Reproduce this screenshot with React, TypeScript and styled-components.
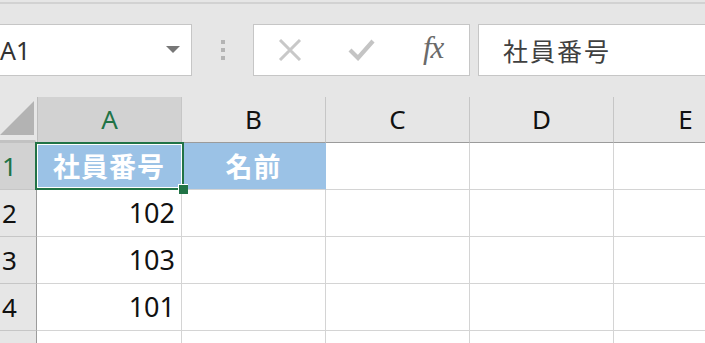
import React from 'react'
import styled, { createGlobalStyle, css } from 'styled-components'

const GlobalStyle = createGlobalStyle`
  html, body {
    margin: 0;
    padding: 0;
    background: #e6e6e6;
    overflow: hidden;
  }
  body {
    font-family: "Noto Sans CJK JP", "Noto Sans", sans-serif;
  }
`

const GREEN = '#217346'
const GRID = '#d4d4d4'
const FILL = '#9bc2e6'

const Wrapper = styled.div`
  width: 705px;
  height: 343px;
  overflow: hidden;
  background: #e6e6e6;
`

const TopRule = styled.div`
  height: 2px;
  margin-top: 2px;
  background: #d2d2d2;
`

const FormulaBar = styled.div`
  display: flex;
  align-items: stretch;
  height: 52px;
  margin-top: 20px;
  margin-bottom: 21px;
`

const NameBox = styled.div`
  box-sizing: border-box;
  width: 203px;
  margin-left: -11px;
  display: flex;
  align-items: center;
  justify-content: space-between;
  padding: 0 11px 0 10px;
  background: #fff;
  border: 1px solid #c6c6c6;
  font-family: "Noto Sans", sans-serif;
  font-size: 25px;
  color: #333;
`

const DropArrow = styled.span`
  width: 0;
  height: 0;
  border-left: 7px solid transparent;
  border-right: 7px solid transparent;
  border-top: 7px solid #777;
  margin-top: -2px;
`

const Grip = styled.div`
  width: 61px;
  display: flex;
  flex-direction: column;
  align-items: center;
  justify-content: center;
  gap: 4px;

  span {
    width: 4px;
    height: 4px;
    background: #b4b4b4;
  }
`

const FuncBox = styled.div`
  box-sizing: border-box;
  width: 217px;
  display: flex;
  background: #fff;
  border: 1px solid #c6c6c6;
`

const FuncSlot = styled.div`
  width: 72px;
  display: flex;
  align-items: center;
  justify-content: center;
`

const Fx = styled.span`
  font-family: "Liberation Serif", serif;
  font-style: italic;
  font-size: 31px;
  color: #6a6a6a;
  letter-spacing: -1px;
  margin-top: -4px;
`

const FormulaInput = styled.div`
  box-sizing: border-box;
  flex: 1;
  margin-left: 8px;
  margin-right: -10px;
  display: flex;
  align-items: center;
  padding-left: 24px;
  background: #fff;
  border: 1px solid #c6c6c6;
  font-size: 25px;
  color: #404040;
  letter-spacing: 2px;
`

const Sheet = styled.div`
  position: relative;
  display: grid;
  grid-template-columns: 37px 145px 144px 144px 144px 144px;
  grid-template-rows: 46px repeat(5, 47px);
  background: #fff;
`

const Corner = styled.div`
  position: relative;
  box-sizing: border-box;
  background: #e6e6e6;
  border-right: 2px solid #e6e6e6;
  border-bottom: 3px solid #c2c2c2;

  &::after {
    content: '';
    position: absolute;
    right: 1px;
    bottom: 5px;
    width: 0;
    height: 0;
    border-left: 34px solid transparent;
    border-bottom: 34px solid #b3b3b3;
  }
`

const ColHead = styled.div<{ $active?: boolean }>`
  box-sizing: border-box;
  display: flex;
  align-items: center;
  justify-content: center;
  padding-bottom: 2px;
  background: ${p => (p.$active ? '#d2d2d2' : '#e6e6e6')};
  border-right: 1px solid #c6c6c6;
  border-bottom: 1px solid #9b9b9b;
  font-family: "Noto Sans", sans-serif;
  font-size: 26px;
  color: ${p => (p.$active ? GREEN : '#111')};
  ${p => p.$active && css`border-left: 1px solid #bdbdbd;`}
`

const RowHead = styled.div<{ $active?: boolean }>`
  box-sizing: border-box;
  display: flex;
  align-items: center;
  padding-left: 2px;
  background: ${p => (p.$active ? '#d2d2d2' : '#e6e6e6')};
  border-right: 1px solid #9b9b9b;
  border-bottom: 1px solid #c6c6c6;
  font-family: "Noto Sans", sans-serif;
  font-size: 26px;
  color: ${p => (p.$active ? GREEN : '#111')};
`

const Cell = styled.div<{ $fill?: boolean; $num?: boolean }>`
  box-sizing: border-box;
  display: flex;
  align-items: center;
  justify-content: ${p => (p.$num ? 'flex-end' : 'center')};
  padding: 0 6px 2px 0;
  border-right: 1px solid ${p => (p.$fill ? FILL : GRID)};
  border-bottom: 1px solid ${GRID};
  background: ${p => (p.$fill ? FILL : '#fff')};
  font-size: 27px;
  color: #111;
  ${p =>
    p.$fill &&
    css`
      padding: 0 0 2px 0;
      color: #fff;
      font-weight: 700;
      letter-spacing: 1px;
    `}
  ${p =>
    p.$num &&
    css`
      font-family: "Noto Sans", sans-serif;
    `}
`

const Selection = styled.div`
  position: absolute;
  left: 35px;
  top: 45px;
  width: 149px;
  height: 48px;
  box-sizing: border-box;
  border: 2px solid ${GREEN};
  box-shadow: inset 0 0 0 1px #fff;
  pointer-events: none;
`

const FillHandle = styled.div`
  position: absolute;
  right: -6px;
  bottom: -6px;
  width: 9px;
  height: 9px;
  background: ${GREEN};
  border-top: 1px solid #fff;
  border-left: 1px solid #fff;
`

const cols = ['A', 'B', 'C', 'D', 'E']

// row 5 sits mostly below the fold, so its number is not visible
const rows: { n: number; label: string; cells: { text?: string; fill?: boolean; num?: boolean }[] }[] = [
  { n: 1, label: '1', cells: [{ text: '社員番号', fill: true }, { text: '名前', fill: true }, {}, {}, {}] },
  { n: 2, label: '2', cells: [{ text: '102', num: true }, {}, {}, {}, {}] },
  { n: 3, label: '3', cells: [{ text: '103', num: true }, {}, {}, {}, {}] },
  { n: 4, label: '4', cells: [{ text: '101', num: true }, {}, {}, {}, {}] },
  { n: 5, label: '', cells: [{}, {}, {}, {}, {}] },
]

function CancelIcon() {
  return (
    <svg width="26" height="22" viewBox="0 0 26 22">
      <path d="M3 1 L23 21 M23 1 L3 21" stroke="#c8c8c8" strokeWidth="3" fill="none" />
    </svg>
  )
}

function EnterIcon() {
  return (
    <svg width="27" height="22" viewBox="0 0 27 22">
      <path d="M2 11 L10 19 L25 2" stroke="#c4c4c4" strokeWidth="4.2" fill="none" strokeLinejoin="miter" />
    </svg>
  )
}

export default function App() {
  return (
    <Wrapper>
      <GlobalStyle />
      <TopRule />
      <FormulaBar>
        <NameBox>
          <span>A1</span>
          <DropArrow />
        </NameBox>
        <Grip>
          <span />
          <span />
          <span />
        </Grip>
        <FuncBox>
          <FuncSlot><CancelIcon /></FuncSlot>
          <FuncSlot><EnterIcon /></FuncSlot>
          <FuncSlot><Fx>fx</Fx></FuncSlot>
        </FuncBox>
        <FormulaInput>社員番号</FormulaInput>
      </FormulaBar>
      <Sheet>
        <Corner />
        {cols.map(c => (
          <ColHead key={c} $active={c === 'A'}>{c}</ColHead>
        ))}
        {rows.map(r => (
          <React.Fragment key={r.n}>
            <RowHead $active={r.n === 1}>{r.label}</RowHead>
            {r.cells.map((cell, i) => (
              <Cell key={i} $fill={cell.fill} $num={cell.num}>{cell.text}</Cell>
            ))}
          </React.Fragment>
        ))}
        <Selection>
          <FillHandle />
        </Selection>
      </Sheet>
    </Wrapper>
  )
}
